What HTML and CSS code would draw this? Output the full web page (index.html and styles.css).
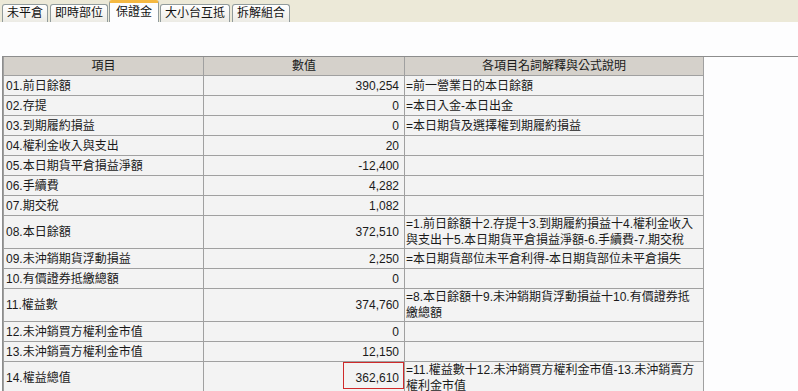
FILE: index.html
```html
<!DOCTYPE html>
<html lang="zh-Hant">
<head>
<meta charset="utf-8">
<title>保證金</title>
<link rel="stylesheet" href="styles.css">
</head>
<body>
<div class="tabbar">
  <div class="tab">未平倉</div>
  <div class="tab">即時部位</div>
  <div class="tab active">保證金</div>
  <div class="tab">大小台互抵</div>
  <div class="tab">拆解組合</div>
</div>
<div class="panel">
  <div class="grid">
    <table class="margin-table">
      <colgroup>
        <col class="c1"><col class="c2"><col class="c3">
      </colgroup>
      <thead>
        <tr><th>項目</th><th>數值</th><th>各項目名詞解釋與公式說明</th></tr>
      </thead>
      <tbody>
        <tr><td class="name">01.前日餘額</td><td class="num">390,254</td><td class="desc">=前一營業日的本日餘額</td></tr>
        <tr><td class="name">02.存提</td><td class="num">0</td><td class="desc">=本日入金-本日出金</td></tr>
        <tr><td class="name">03.到期履約損益</td><td class="num">0</td><td class="desc">=本日期貨及選擇權到期履約損益</td></tr>
        <tr><td class="name">04.權利金收入與支出</td><td class="num">20</td><td class="desc"></td></tr>
        <tr><td class="name">05.本日期貨平倉損益淨額</td><td class="num">-12,400</td><td class="desc"></td></tr>
        <tr><td class="name">06.手續費</td><td class="num">4,282</td><td class="desc"></td></tr>
        <tr><td class="name">07.期交稅</td><td class="num">1,082</td><td class="desc"></td></tr>
        <tr><td class="name">08.本日餘額</td><td class="num">372,510</td><td class="desc">=1.前日餘額十2.存提十3.到期履約損益十4.權利金收入<br>與支出十5.本日期貨平倉損益淨額-6.手續費-7.期交稅</td></tr>
        <tr><td class="name">09.未沖銷期貨浮動損益</td><td class="num">2,250</td><td class="desc">=本日期貨部位未平倉利得-本日期貨部位未平倉損失</td></tr>
        <tr><td class="name">10.有價證券抵繳總額</td><td class="num">0</td><td class="desc"></td></tr>
        <tr><td class="name">11.權益數</td><td class="num">374,760</td><td class="desc">=8.本日餘額十9.未沖銷期貨浮動損益十10.有價證券抵<br>繳總額</td></tr>
        <tr><td class="name">12.未沖銷買方權利金市值</td><td class="num">0</td><td class="desc"></td></tr>
        <tr><td class="name">13.未沖銷賣方權利金市值</td><td class="num">12,150</td><td class="desc"></td></tr>
        <tr><td class="name">14.權益總值</td><td class="num marked">362,610<span class="mark"></span></td><td class="desc">=11.權益數十12.未沖銷買方權利金市值-13.未沖銷賣方<br>權利金市值</td></tr>
      </tbody>
    </table>
  </div>
</div>
</body>
</html>
```

FILE: styles.css
```css
html, body {
  margin: 0;
  padding: 0;
}
body {
  background: #fdfdfe;
  font-family: "Liberation Sans", "Noto Sans CJK TC", sans-serif;
  font-size: 12px;
  color: #1a1a1a;
}

.tabbar {
  display: flex;
  align-items: flex-end;
  gap: 2px;
  height: 22px;
  padding-left: 2px;
  background: #ece9d8;
}
.tab {
  box-sizing: border-box;
  height: 18px;
  line-height: 17px;
  padding: 0 4px;
  border: 1px solid #919b9c;
  border-bottom: none;
  border-radius: 3px 3px 0 0;
  background: linear-gradient(#ffffff, #ecebe5);
  color: #111;
  white-space: nowrap;
}
.tab.active {
  height: 22px;
  line-height: 18px;
  padding: 0 6px;
  margin: 0 -1px;
  border-top: 3px solid #f5b942;
  background: #fdfdfe;
}

.panel {
  padding-top: 34px;
}
.grid {
  margin-left: 2px;
  border-top: 1px solid #8d8d8d;
  border-left: 1px solid #8d8d8d;
}

.margin-table {
  border-collapse: separate;
  border-spacing: 0;
  table-layout: fixed;
  width: 701px;
  border-left: 1px solid #a0a0a0;
}
.margin-table col.c1 { width: 200px; }
.margin-table col.c2 { width: 201px; }
.margin-table col.c3 { width: 299px; }

.margin-table th,
.margin-table td {
  box-sizing: border-box;
  border-right: 1px solid #a0a0a0;
  border-bottom: 1px solid #a0a0a0;
  padding: 0;
  overflow: hidden;
  white-space: nowrap;
}
.margin-table th {
  height: 19px;
  background: #d5d1cb;
  font-weight: normal;
  text-align: center;
  line-height: 18px;
}
.margin-table td {
  height: 20px;
  background: #f3f3f3;
  line-height: 16px;
  vertical-align: middle;
}
.margin-table td.name {
  padding-left: 2px;
}
.margin-table td.num {
  text-align: right;
  padding-right: 5px;
}
.margin-table td.desc {
  padding-left: 1px;
}
.margin-table td.marked {
  position: relative;
}
.mark {
  position: absolute;
  top: 0;
  right: 0;
  width: 61px;
  height: 27px;
  box-sizing: border-box;
  border: 1px solid #cf2a2a;
}
```
